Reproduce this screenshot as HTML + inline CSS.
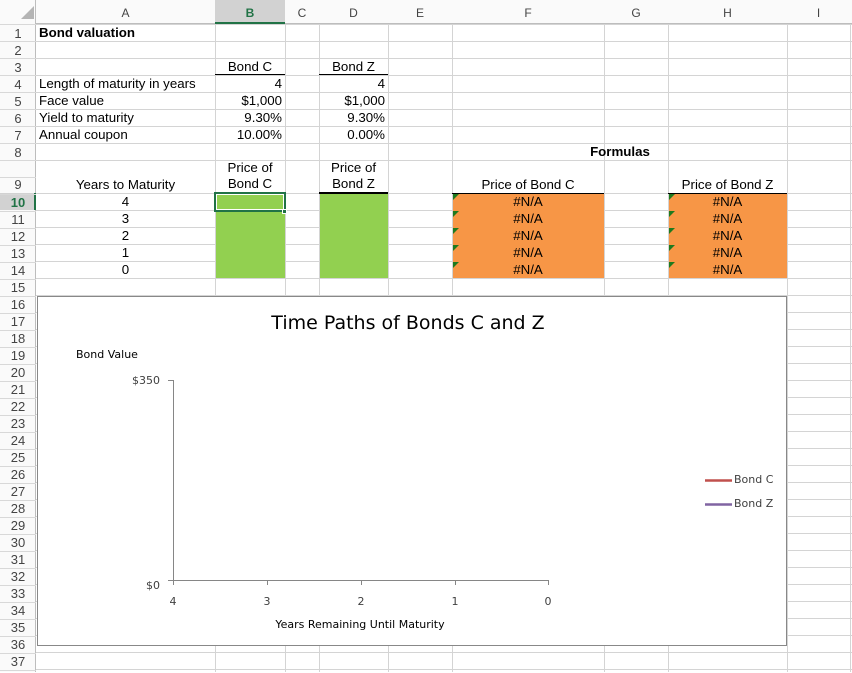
<!DOCTYPE html>
<html><head><meta charset="utf-8"><style>
*{margin:0;padding:0;box-sizing:border-box}
body{width:852px;height:672px;overflow:hidden;background:#fff;position:relative;font-family:"Liberation Sans",Arial,sans-serif;font-size:13.3px;color:#000}
.a{position:absolute;white-space:nowrap}
.v{position:absolute;top:0;width:1px;height:672px;background:#d4d4d4}
.t{position:absolute;line-height:17px;height:17px;white-space:nowrap}
.r{text-align:right;padding-right:3px}
.c{text-align:center}
.rh{position:absolute;left:0;width:36px;text-align:center;color:#444;font-size:13px;line-height:18px}
.ch{position:absolute;top:0;height:24px;line-height:26px;text-align:center;color:#444;font-size:12px}
.tri{position:absolute;width:0;height:0;border-top:6px solid #1e7a1e;border-right:6px solid transparent}
.ct{font-family:"DejaVu Sans","Liberation Sans",sans-serif;color:#404040}
</style></head><body>
<div class="a" style="left:0;top:24px;width:852px;height:137px;background:repeating-linear-gradient(to bottom,#d4d4d4 0 1px,transparent 1px 17px)"></div>
<div class="a" style="left:0;top:193px;width:852px;height:479px;background:repeating-linear-gradient(to bottom,#d4d4d4 0 1px,transparent 1px 17px)"></div>
<div class="a" style="left:0;top:160px;width:852px;height:1px;background:#d4d4d4"></div>
<div class="v" style="left:215px"></div><div class="v" style="left:285px"></div><div class="v" style="left:319px"></div><div class="v" style="left:388px"></div><div class="v" style="left:452px"></div><div class="v" style="left:604px"></div><div class="v" style="left:668px"></div><div class="v" style="left:787px"></div><div class="v" style="left:850px"></div>
<!-- headers -->
<div class="a" style="left:0;top:0;width:852px;height:24px;background:#fafafa;border-bottom:1px solid #bdbdbd"></div>
<div class="a" style="left:0;top:0;width:36px;height:672px;background:#fafafa;border-right:1px solid #bdbdbd"></div>
<div class="a" style="left:21px;top:6px;width:0;height:0;border-left:13px solid transparent;border-bottom:13px solid #b4b4b4"></div>
<div class="a" style="left:215px;top:0;width:70px;height:24px;background:#d2d2d2;border-bottom:2px solid #217346"></div>
<div class="a" style="left:0;top:193px;width:36px;height:17px;background:#d2d2d2;border-right:2px solid #217346"></div>
<div class="ch" style="left:36px;width:179px">A</div>
<div class="ch" style="left:215px;width:70px;font-weight:bold;color:#217346">B</div>
<div class="ch" style="left:285px;width:34px">C</div>
<div class="ch" style="left:319px;width:69px">D</div>
<div class="ch" style="left:388px;width:64px">E</div>
<div class="ch" style="left:452px;width:152px">F</div>
<div class="ch" style="left:604px;width:64px">G</div>
<div class="ch" style="left:668px;width:119px">H</div>
<div class="ch" style="left:787px;width:63px">I</div>
<div class="a" style="left:0;top:24px;width:36px;height:649px;background:repeating-linear-gradient(to bottom,#d8d8d8 0 1px,transparent 1px 17px)"></div>
<div class="rh" style="top:25px">1</div><div class="rh" style="top:42px">2</div><div class="rh" style="top:59px">3</div><div class="rh" style="top:76px">4</div><div class="rh" style="top:93px">5</div><div class="rh" style="top:110px">6</div><div class="rh" style="top:127px">7</div><div class="rh" style="top:144px">8</div><div class="rh" style="top:176px">9</div>
<div class="rh" style="top:194px;font-weight:bold;color:#217346">10</div><div class="rh" style="top:211px">11</div><div class="rh" style="top:228px">12</div><div class="rh" style="top:245px">13</div><div class="rh" style="top:262px">14</div><div class="rh" style="top:279px">15</div><div class="rh" style="top:296px">16</div><div class="rh" style="top:313px">17</div><div class="rh" style="top:330px">18</div><div class="rh" style="top:347px">19</div><div class="rh" style="top:364px">20</div><div class="rh" style="top:381px">21</div><div class="rh" style="top:398px">22</div><div class="rh" style="top:415px">23</div><div class="rh" style="top:432px">24</div><div class="rh" style="top:449px">25</div><div class="rh" style="top:466px">26</div><div class="rh" style="top:483px">27</div><div class="rh" style="top:500px">28</div><div class="rh" style="top:517px">29</div><div class="rh" style="top:534px">30</div><div class="rh" style="top:551px">31</div><div class="rh" style="top:568px">32</div><div class="rh" style="top:585px">33</div><div class="rh" style="top:602px">34</div><div class="rh" style="top:619px">35</div><div class="rh" style="top:636px">36</div><div class="rh" style="top:653px">37</div>
<!-- fills -->
<div class="a" style="left:216px;top:194px;width:69px;height:84px;background:#92d050"></div>
<div class="a" style="left:320px;top:194px;width:68px;height:84px;background:#92d050"></div>
<div class="a" style="left:453px;top:194px;width:151px;height:84px;background:#f79646"></div>
<div class="a" style="left:669px;top:194px;width:118px;height:84px;background:#f79646"></div>
<div class="a" style="left:214px;top:192px;width:72px;height:20px;border:2px solid #217346"></div>
<div class="a" style="left:216px;top:194px;width:68px;height:16px;border:1px solid #fff"></div>
<div class="a" style="left:282px;top:209px;width:5px;height:5px;background:#217346;border:1px solid #fff"></div>
<!-- borders -->
<div class="a" style="left:215px;top:74px;width:70px;height:1px;background:#000"></div>
<div class="a" style="left:319px;top:74px;width:69px;height:1px;background:#000"></div>
<div class="a" style="left:319px;top:192px;width:69px;height:2px;background:#000"></div>
<div class="a" style="left:452px;top:193px;width:152px;height:1px;background:#000"></div>
<div class="a" style="left:668px;top:193px;width:119px;height:1px;background:#000"></div>
<!-- text -->
<div class="t" style="left:39px;top:24px;font-weight:bold">Bond valuation</div>
<div class="t c" style="left:215px;top:58px;width:70px">Bond C</div>
<div class="t c" style="left:319px;top:58px;width:69px">Bond Z</div>
<div class="t" style="left:39px;top:75px">Length of maturity in years</div>
<div class="t" style="left:39px;top:92px">Face value</div>
<div class="t" style="left:39px;top:109px">Yield to maturity</div>
<div class="t" style="left:39px;top:126px">Annual coupon</div>
<div class="t r" style="left:215px;top:75px;width:70px">4</div>
<div class="t r" style="left:215px;top:92px;width:70px">$1,000</div>
<div class="t r" style="left:215px;top:109px;width:70px">9.30%</div>
<div class="t r" style="left:215px;top:126px;width:70px">10.00%</div>
<div class="t r" style="left:319px;top:75px;width:69px">4</div>
<div class="t r" style="left:319px;top:92px;width:69px">$1,000</div>
<div class="t r" style="left:319px;top:109px;width:69px">9.30%</div>
<div class="t r" style="left:319px;top:126px;width:69px">0.00%</div>
<div class="t c" style="left:452px;top:143px;width:336px;font-weight:bold">Formulas</div>
<div class="t c" style="left:36px;top:176px;width:179px">Years to Maturity</div>
<div class="t c" style="left:215px;top:160px;width:70px;line-height:16px;height:33px;white-space:normal">Price of<br>Bond C</div>
<div class="t c" style="left:319px;top:160px;width:69px;line-height:16px;height:33px;white-space:normal">Price of<br>Bond Z</div>
<div class="t c" style="left:452px;top:176px;width:152px">Price of Bond C</div>
<div class="t c" style="left:668px;top:176px;width:119px">Price of Bond Z</div>
<div class="t c" style="left:36px;top:193px;width:179px">4</div>
<div class="t c" style="left:36px;top:210px;width:179px">3</div>
<div class="t c" style="left:36px;top:227px;width:179px">2</div>
<div class="t c" style="left:36px;top:244px;width:179px">1</div>
<div class="t c" style="left:36px;top:261px;width:179px">0</div>
<div class="t c" style="left:452px;top:193px;width:152px">#N/A</div><div class="t c" style="left:452px;top:210px;width:152px">#N/A</div><div class="t c" style="left:452px;top:227px;width:152px">#N/A</div><div class="t c" style="left:452px;top:244px;width:152px">#N/A</div><div class="t c" style="left:452px;top:261px;width:152px">#N/A</div>
<div class="t c" style="left:668px;top:193px;width:119px">#N/A</div><div class="t c" style="left:668px;top:210px;width:119px">#N/A</div><div class="t c" style="left:668px;top:227px;width:119px">#N/A</div><div class="t c" style="left:668px;top:244px;width:119px">#N/A</div><div class="t c" style="left:668px;top:261px;width:119px">#N/A</div>
<div class="tri" style="left:453px;top:194px"></div><div class="tri" style="left:453px;top:211px"></div><div class="tri" style="left:453px;top:228px"></div><div class="tri" style="left:453px;top:245px"></div><div class="tri" style="left:453px;top:262px"></div>
<div class="tri" style="left:669px;top:194px"></div><div class="tri" style="left:669px;top:211px"></div><div class="tri" style="left:669px;top:228px"></div><div class="tri" style="left:669px;top:245px"></div><div class="tri" style="left:669px;top:262px"></div>
<!-- chart -->
<div class="a" style="left:37px;top:296px;width:750px;height:350px;background:#fff;border:1px solid #888"></div>
<div class="a ct" style="left:37px;top:312px;width:742px;text-align:center;font-size:19px;color:#000">Time Paths of Bonds C and Z</div>
<div class="a ct" style="left:76px;top:348px;font-size:11px;color:#000">Bond Value</div>
<div class="a ct" style="left:120px;top:374px;width:40px;text-align:right;font-size:11px">$350</div>
<div class="a ct" style="left:120px;top:579px;width:40px;text-align:right;font-size:11px">$0</div>
<svg class="a" style="left:0;top:0" width="852" height="672"><g stroke="#868686" stroke-width="1" fill="none">
<path d="M173.5 380V580.5M168 380.5H173.5M168 580.5H548.5M173.5 580V585M267.5 580V585M361.5 580V585M455.5 580V585M548.5 580V585"/></g>
<path d="M705 480.5H732" stroke="#c0504d" stroke-width="2.5"/><path d="M705 504.5H732" stroke="#8064a2" stroke-width="2.5"/></svg>
<div class="a ct" style="left:153px;top:595px;width:40px;text-align:center;font-size:11px">4</div>
<div class="a ct" style="left:247px;top:595px;width:40px;text-align:center;font-size:11px">3</div>
<div class="a ct" style="left:341px;top:595px;width:40px;text-align:center;font-size:11px">2</div>
<div class="a ct" style="left:435px;top:595px;width:40px;text-align:center;font-size:11px">1</div>
<div class="a ct" style="left:528px;top:595px;width:40px;text-align:center;font-size:11px">0</div>
<div class="a ct" style="left:210px;top:618px;width:300px;text-align:center;font-size:11px;color:#000">Years Remaining Until Maturity</div>
<div class="a ct" style="left:734px;top:473px;font-size:11px">Bond C</div>
<div class="a ct" style="left:734px;top:497px;font-size:11px">Bond Z</div>
</body></html>
